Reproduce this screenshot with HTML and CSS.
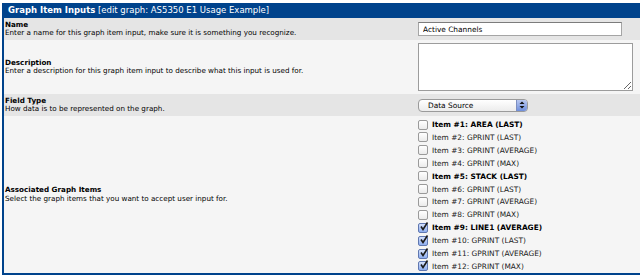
FILE: index.html
```html
<!DOCTYPE html>
<html>
<head>
    <meta charset="UTF-8">
    <title>Graph Item Inputs</title>
    <link rel="stylesheet" href="styles.css">
</head>
<body>
<div class="box">
    <div class="header"><b>Graph Item Inputs</b> [edit graph: AS5350 E1 Usage Example]</div>

    <div class="row dark name-row">
        <div class="label">
            <b>Name</b><br>
            Enter a name for this graph item input, make sure it is something you recognize.
        </div>
        <div class="field">
            <input type="text" class="text" value="Active Channels">
        </div>
    </div>

    <div class="row light desc-row">
        <div class="label">
            <b>Description</b><br>
            Enter a description for this graph item input to describe what this input is used for.
        </div>
        <div class="field">
            <textarea class="area"></textarea>
        </div>
    </div>

    <div class="row dark type-row">
        <div class="label">
            <b>Field Type</b><br>
            How data is to be represented on the graph.
        </div>
        <div class="field">
            <div class="select">
                <span>Data Source</span>
                <span class="arrows">
                    <svg width="6" height="8" viewBox="0 0 6 8"><path d="M3 0.5 L5.5 3 L0.5 3 Z M3 7.5 L5.5 5 L0.5 5 Z" fill="#111"/></svg>
                </span>
            </div>
        </div>
    </div>

    <div class="row light items-row">
        <div class="label">
            <b>Associated Graph Items</b><br>
            Select the graph items that you want to accept user input for.
        </div>
        <div class="field">
            <ul class="items">
                <li class="main"><span class="chk"></span>Item #1: AREA (LAST)</li>
                <li><span class="chk"></span>Item #2: GPRINT (LAST)</li>
                <li><span class="chk"></span>Item #3: GPRINT (AVERAGE)</li>
                <li><span class="chk"></span>Item #4: GPRINT (MAX)</li>
                <li class="main"><span class="chk"></span>Item #5: STACK (LAST)</li>
                <li><span class="chk"></span>Item #6: GPRINT (LAST)</li>
                <li><span class="chk"></span>Item #7: GPRINT (AVERAGE)</li>
                <li><span class="chk"></span>Item #8: GPRINT (MAX)</li>
                <li class="main"><span class="chk on"><svg width="10" height="10" viewBox="0 0 10 10"><path d="M2 4.5 L4 7.5 L8.5 0.5" stroke="#1a1a1a" stroke-width="1.6" fill="none"/></svg></span>Item #9: LINE1 (AVERAGE)</li>
                <li><span class="chk on"><svg width="10" height="10" viewBox="0 0 10 10"><path d="M2 4.5 L4 7.5 L8.5 0.5" stroke="#1a1a1a" stroke-width="1.6" fill="none"/></svg></span>Item #10: GPRINT (LAST)</li>
                <li><span class="chk on"><svg width="10" height="10" viewBox="0 0 10 10"><path d="M2 4.5 L4 7.5 L8.5 0.5" stroke="#1a1a1a" stroke-width="1.6" fill="none"/></svg></span>Item #11: GPRINT (AVERAGE)</li>
                <li><span class="chk on"><svg width="10" height="10" viewBox="0 0 10 10"><path d="M2 4.5 L4 7.5 L8.5 0.5" stroke="#1a1a1a" stroke-width="1.6" fill="none"/></svg></span>Item #12: GPRINT (MAX)</li>
            </ul>
        </div>
    </div>
</div>
</body>
</html>
```

FILE: styles.css
```css
html, body {
    overflow: hidden;
}

body {
    margin: 3px 0 0 2px;
    background: #ffffff;
    font-family: "DejaVu Sans", Verdana, sans-serif;
    font-size: 7.2px;
    color: #000000;
}

.box {
    border-left: 2px solid #00438c;
    border-bottom: 2px solid #00438c;
}

.header {
    background-color: #00438c;
    color: white;
    height: 15px;
    line-height: 15px;
    padding-left: 4px;
    font-size: 8.5px;
}

.row {
    display: flex;
    align-items: center;
}

.dark {
    background-color: #e5e5e5;
}

.light {
    background-color: #f5f5f5;
}

.label {
    width: 413px;
    padding-left: 1px;
    line-height: 8.5px;
}

.field {
    flex: 1;
}

.name-row { height: 22px; }
.desc-row { height: 54px; }
.type-row { height: 22px; }
.items-row { height: 157px; }

.text {
    display: block;
    box-sizing: border-box;
    width: 204px;
    height: 14px;
    margin: 0;
    padding: 0 4px;
    border: 1px solid #a5a5a5;
    border-top-color: #7c7c7c;
    background: white;
    font-family: "DejaVu Sans", Verdana, sans-serif;
    font-size: 7.4px;
    color: #000;
}

.area {
    display: block;
    box-sizing: border-box;
    width: 215px;
    height: 48px;
    margin: 0;
    border: 1px solid #9c9c9c;
    background: white;
    resize: both;
}

.select {
    display: flex;
    align-items: center;
    justify-content: space-between;
    box-sizing: border-box;
    width: 110px;
    height: 13px;
    padding-left: 9px;
    border: 1px solid #9a9a9a;
    border-radius: 4px;
    background: linear-gradient(#ffffff, #ececec);
    font-size: 7.4px;
    overflow: hidden;
}

.arrows {
    display: flex;
    align-items: center;
    justify-content: center;
    width: 10px;
    height: 11px;
    background: linear-gradient(#b9c8f0, #6f8fdc);
    border-left: 1px solid #7d8fc0;
}

.items {
    list-style: none;
    margin: 0;
    padding: 2px 0 0 0;
    font-size: 7.4px;
}

.items li {
    display: flex;
    align-items: center;
    height: 12.9px;
    color: #1a1a1a;
}

.items li.main {
    font-weight: bold;
    color: #000;
}

.chk {
    display: inline-block;
    box-sizing: border-box;
    width: 10px;
    height: 10px;
    margin-right: 4px;
    border: 1px solid #9a9a9a;
    border-radius: 2px;
    background: linear-gradient(#ffffff, #ebebeb);
    position: relative;
}

.chk.on {
    border-color: #5f77b0;
    background: linear-gradient(#d4e0fa, #8eaef0);
}

.chk svg {
    position: absolute;
    left: 0;
    top: -2px;
}
```
